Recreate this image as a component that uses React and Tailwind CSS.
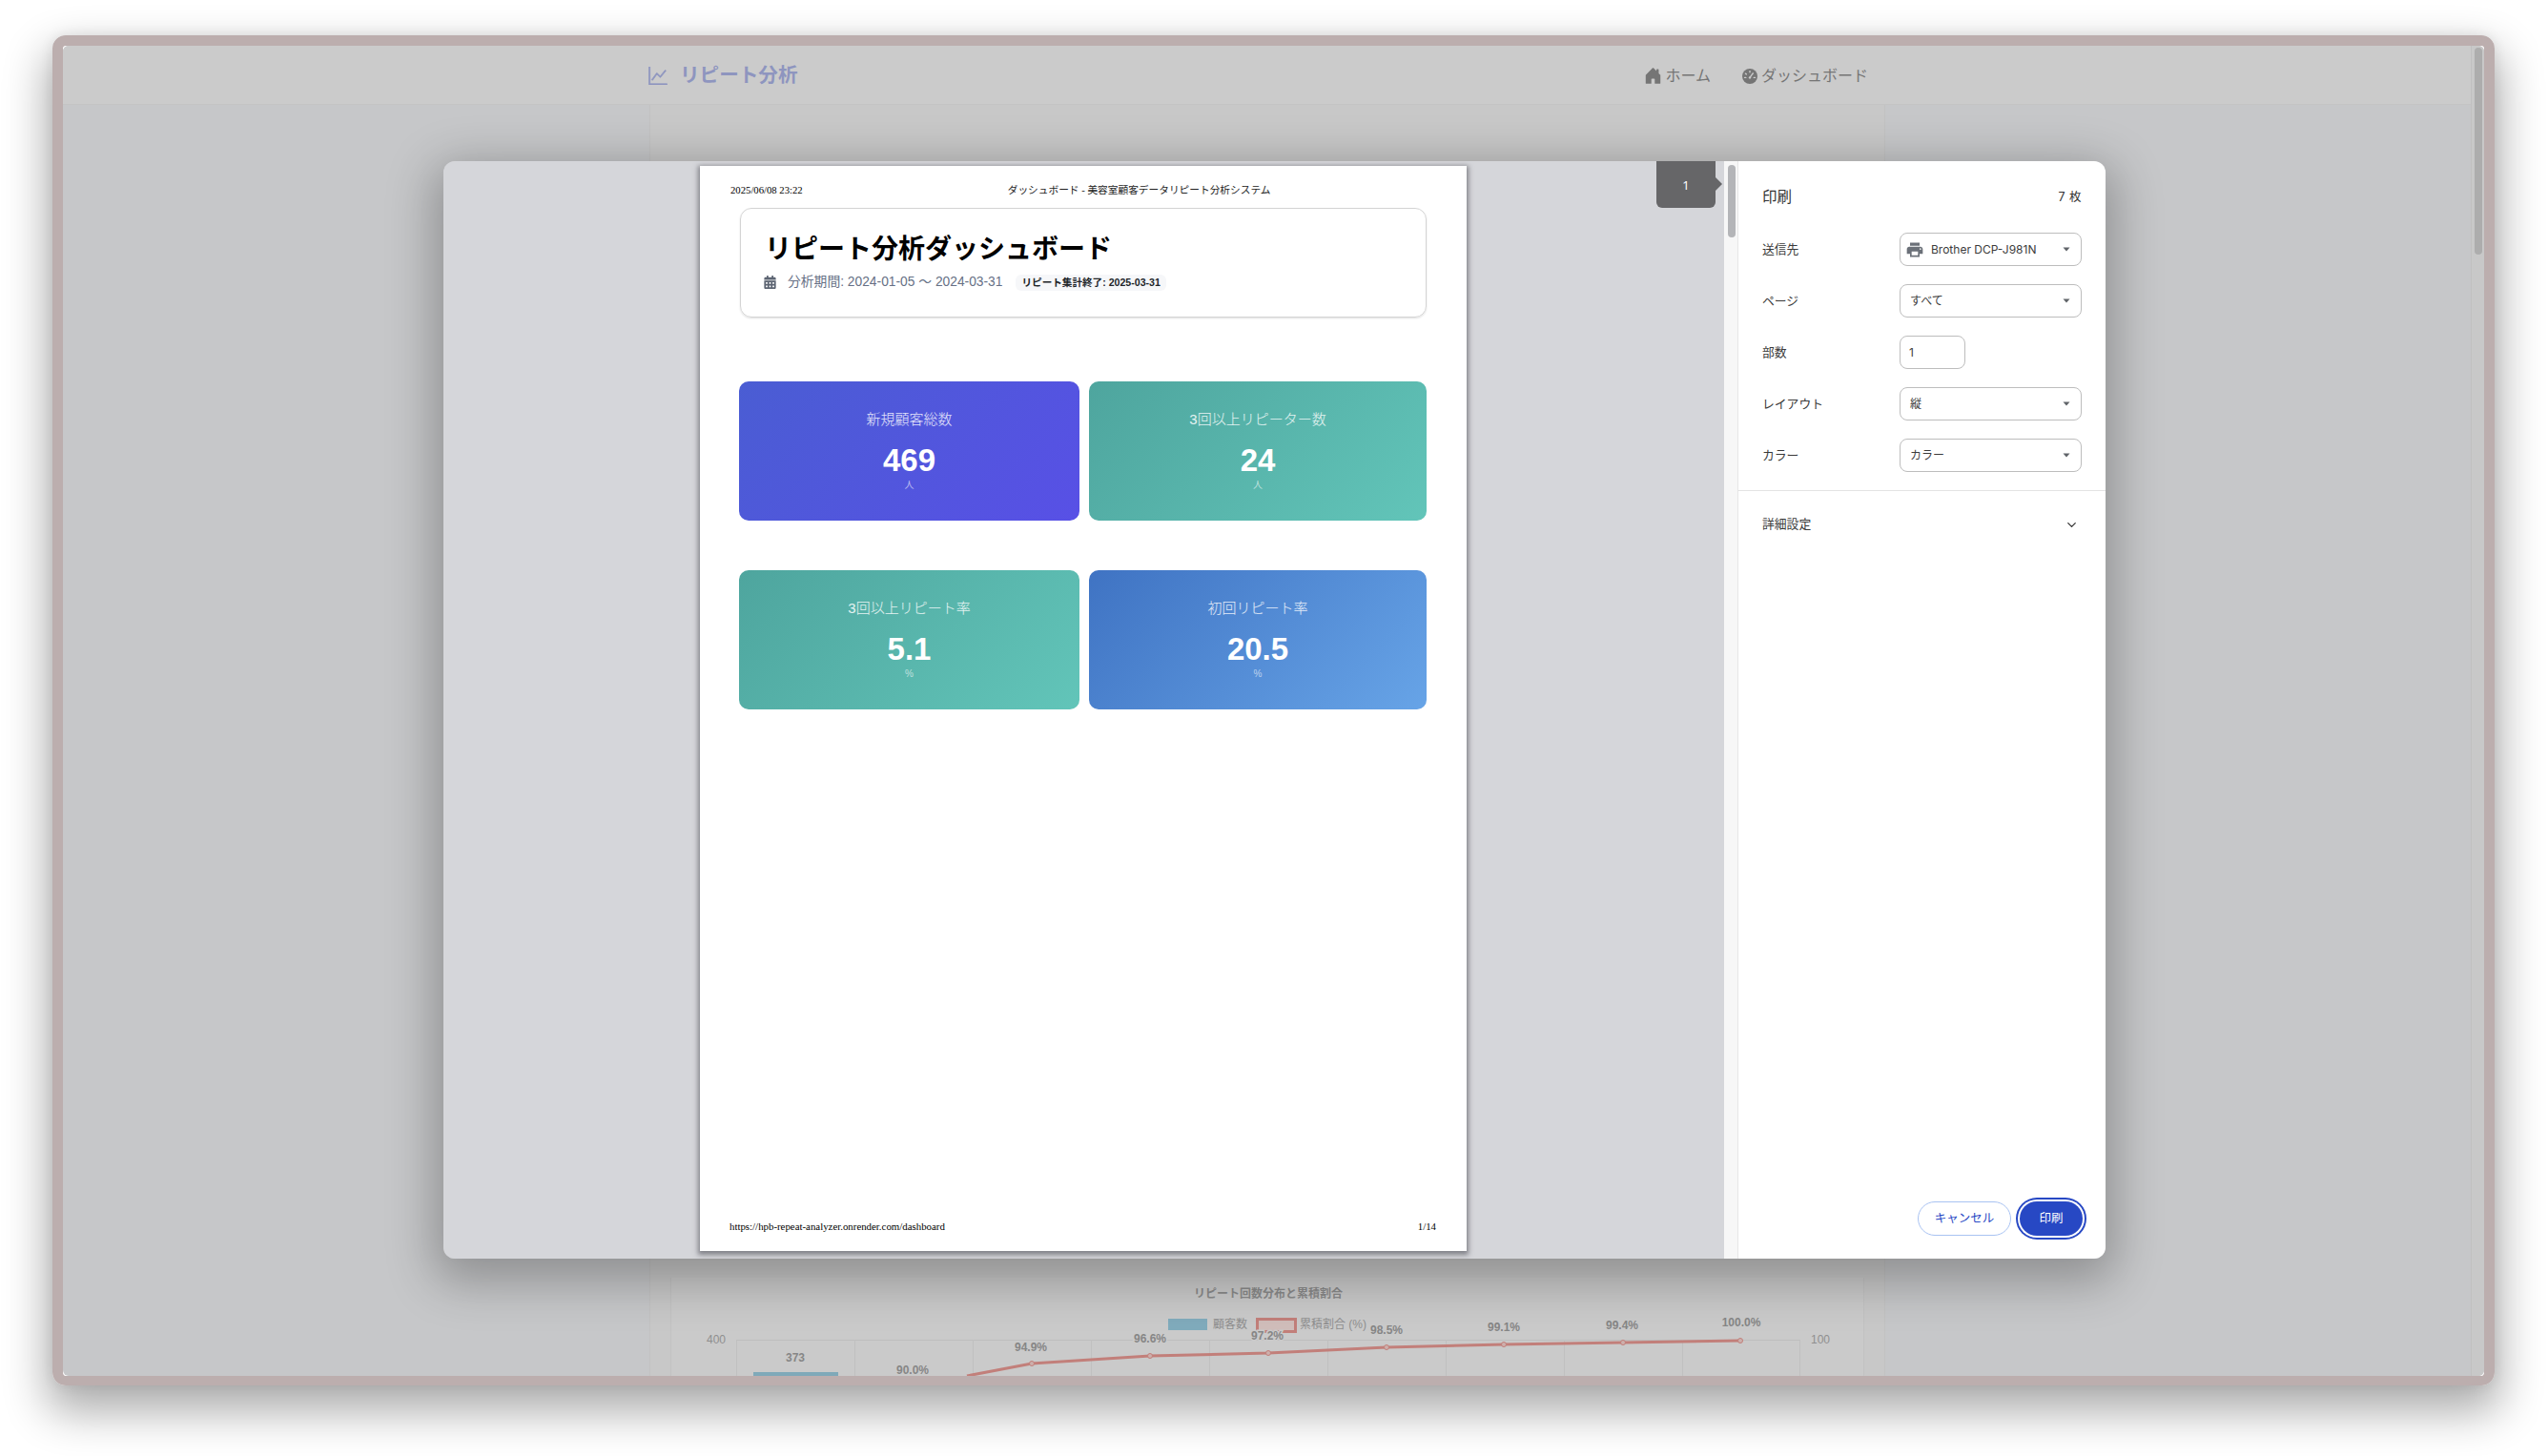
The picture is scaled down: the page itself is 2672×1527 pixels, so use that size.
import { FaCalendarAlt } from 'react-icons/fa';
import { BsGraphUp, BsHouseDoorFill } from 'react-icons/bs';
import { MdPrint } from 'react-icons/md';
import { ChevronDown } from 'lucide-react';

const sansJp = "font-['Liberation_Sans','Noto_Sans_CJK_JP',sans-serif]";

const statCards = [
  { label: '新規顧客総数', value: '469', unit: '人', gradient: 'bg-[linear-gradient(135deg,#4a5dd3,#5850e6)]' },
  { label: '3回以上リピーター数', value: '24', unit: '人', gradient: 'bg-[linear-gradient(135deg,#4ea59e,#62c5b9)]' },
  { label: '3回以上リピート率', value: '5.1', unit: '%', gradient: 'bg-[linear-gradient(135deg,#4ea59e,#62c5b9)]' },
  { label: '初回リピート率', value: '20.5', unit: '%', gradient: 'bg-[linear-gradient(135deg,#3f73c3,#67a4e7)]' },
];

// chart coordinates are relative to the top left of the svg
const gridX = [68, 192, 316, 440, 564, 688, 812, 936, 1060, 1183];
const linePoints = [
  [310, 103],
  [378, 90],
  [502, 82],
  [626, 79],
  [750, 73],
  [873, 70],
  [998, 68],
  [1121, 66],
];
const pointLabels = [
  ['373', 130, 88],
  ['90.0%', 253, 101],
  ['94.9%', 377, 77],
  ['96.6%', 502, 68],
  ['97.2%', 625, 65],
  ['98.5%', 750, 59],
  ['99.1%', 873, 56],
  ['99.4%', 997, 54],
  ['100.0%', 1122, 51],
];

function DashboardIcon() {
  return (
    <svg width="16" height="16" viewBox="0 0 16 16" className="ml-[33px] shrink-0">
      <circle cx="8" cy="8" r="8" fill="#757575" />
      <g stroke="#cbcbcb" strokeWidth="1.4" strokeLinecap="round">
        <path d="M8 2.6v1.2" />
        <path d="M3.4 5.2l1 .6" />
        <path d="M2.6 9.4h1.2" />
        <path d="M12.2 9.4h1.2" />
        <path d="M8 9.4l3.2-4.6" />
      </g>
      <circle cx="8" cy="9.4" r="1.2" fill="#cbcbcb" />
    </svg>
  );
}

function Chart() {
  return (
    <svg width="1250" height="103" className="block shrink-0 font-['Liberation_Sans','Noto_Sans_CJK_JP',sans-serif]">
      <text x="626" y="21" textAnchor="middle" fontSize="12" fontWeight="700" fill="#8a8a8a">
        リピート回数分布と累積割合
      </text>
      <rect x="521" y="43" width="41" height="12" fill="#80abbc" />
      <text x="568" y="53" fontSize="12" fill="#8f8f8f">顧客数</text>
      <rect x="614.5" y="43.5" width="40" height="13" fill="#d0bdba" stroke="#c27f7a" strokeWidth="3" />
      <text x="659" y="53" fontSize="12" fill="#8f8f8f">累積割合 (%)</text>
      <text x="47" y="69" fontSize="12" fill="#8f8f8f" textAnchor="middle">400</text>
      <text x="1205" y="69" fontSize="12" fill="#8f8f8f" textAnchor="middle">100</text>
      <line x1="68" y1="65.5" x2="1183" y2="65.5" stroke="#bdbdbd" />
      {gridX.map((x) => (
        <line key={x} x1={x + 0.5} y1="65" x2={x + 0.5} y2="103" stroke="#c0c0c0" />
      ))}
      <rect x="86" y="99" width="89" height="4" fill="#7fa9b9" />
      <polyline
        points={linePoints.map((p) => p.join(',')).join(' ')}
        fill="none"
        stroke="#c27f7a"
        strokeWidth="3"
      />
      {linePoints.slice(1).map(([x, y]) => (
        <circle key={x} cx={x} cy={y} r="2.5" fill="#cdb0ad" stroke="#c27f7a" />
      ))}
      {pointLabels.map(([text, x, y]) => (
        <text
          key={text}
          x={x}
          y={y}
          textAnchor="middle"
          fontSize="12"
          fontWeight="700"
          fill="#868686"
          stroke="#cacaca"
          strokeWidth="3"
          paintOrder="stroke"
        >
          {text}
        </text>
      ))}
    </svg>
  );
}

function StatCard({ label, value, unit, gradient }) {
  return (
    <div className={`flex h-[146px] flex-col items-center rounded-[10px] pt-[30px] text-white ${gradient}`}>
      <div className="h-5 text-[15px] leading-5 font-light text-white/85">{label}</div>
      <div className="mt-[16px] h-[34px] text-[33px] leading-[34px] font-bold">{value}</div>
      <div className="mt-[3px] text-[10px] leading-3 text-white/60">{unit}</div>
    </div>
  );
}

function PrintedPage() {
  return (
    <div className={`ml-[269px] flex h-[1138px] w-[804px] shrink-0 flex-col bg-white shadow-[0_2px_5px_2px_rgba(60,60,70,0.55)] ${sansJp}`}>
      <div className="flex h-[44px] items-center pt-[7px] pl-[32px] font-['Liberation_Serif','Noto_Sans_CJK_JP',serif] text-[10.7px] text-black">
        <span>2025/06/08 23:22</span>
        <span className="ml-[215px] text-[#222]">ダッシュボード - 美容室顧客データリピート分析システム</span>
      </div>
      <div className="mx-[42px] h-[115px] rounded-[12px] border border-[#d4d4d4] px-[25px] pt-[25px] shadow-[0_1px_2px_rgba(0,0,0,0.12)]">
        <h1 className="text-[28px] leading-[36px] font-bold text-black">リピート分析ダッシュボード</h1>
        <div className="mt-[7px] flex h-[18px] items-center text-[13.8px] text-[#667085]">
          <FaCalendarAlt className="ml-[-1px] h-[14px] w-[13px] shrink-0 text-[#5c6472]" />
          <span className="ml-[12px]">分析期間: 2024-01-05 〜 2024-03-31</span>
          <span className="ml-[14px] rounded-[6px] bg-[#f6f7f9] px-[6px] text-[10.6px] leading-[17px] font-bold text-[#212529]">
            リピート集計終了: 2025-03-31
          </span>
        </div>
      </div>
      <div className="mx-[41px] mt-[67px] grid grid-cols-[357px_354px] gap-x-[10px] gap-y-[52px]">
        {statCards.map((card) => (
          <StatCard key={card.label} {...card} />
        ))}
      </div>
      <div className="mt-auto flex h-[34px] items-start justify-between pr-[32px] pl-[31px] font-['Liberation_Serif',serif] text-[10.85px] text-black">
        <span>https://hpb-repeat-analyzer.onrender.com/dashboard</span>
        <span>1/14</span>
      </div>
    </div>
  );
}

function Field({ label, value, icon, narrow, caret = true }) {
  return (
    <div className="mb-[19px] flex h-[35px] items-center">
      <div className="w-[144px] text-[12.8px] text-[#3a3a3a]">{label}</div>
      <div className={`flex h-[35px] items-center rounded-[8px] border border-[#bdbdbd] pr-[10px] text-[12px] text-[#3c3c3c] ${narrow ? 'w-[69px] pl-[9px]' : 'w-[191px] pl-[10px]'}`}>
        {icon}
        <span>{value}</span>
        {caret && (
          <svg width="8" height="5" viewBox="0 0 8 5" className="mr-[1px] ml-auto">
            <path d="M0.5 0.5h7L4 4.5z" fill="#5f6368" />
          </svg>
        )}
      </div>
    </div>
  );
}

function PrintPanel() {
  return (
    <div className="flex h-full w-[385px] shrink-0 flex-col bg-white font-['Inter','Noto_Sans_CJK_JP',sans-serif]">
      <div className="px-[25px] pt-[27px]">
        <div className="mb-[26px] flex h-[22px] w-[335px] items-center justify-between text-[#333]">
          <span className="text-[15.5px]">印刷</span>
          <span className="text-[12.5px] tracking-[0.5px]">7 枚</span>
        </div>
        <Field
          label="送信先"
          value="Brother DCP-J981N"
          icon={<MdPrint className="mr-[7px] ml-[-5px] h-[20px] w-[20px] text-[#6b7078]" />}
        />
        <Field label="ページ" value="すべて" />
        <Field label="部数" value="1" narrow caret={false} />
        <Field label="レイアウト" value="縦" />
        <Field label="カラー" value="カラー" />
      </div>
      <div className="h-px bg-[#e3e3e3]" />
      <div className="flex h-[70px] w-[360px] items-center justify-between pr-[3px] pl-[25px] text-[12.8px] text-[#3a3a3a]">
        <span>詳細設定</span>
        <ChevronDown size={15} strokeWidth={2} className="text-[#333]" />
      </div>
      <div className="mt-auto flex justify-end gap-[9px] pr-[24px] pb-[24px] text-[12.5px]">
        <button className="h-[36px] w-[98px] rounded-full border border-[#a9c3f2] bg-white text-[#2748c4]">キャンセル</button>
        <button className="h-[36px] w-[66px] rounded-full bg-[#2748c4] text-white shadow-[0_0_0_2px_#ffffff,0_0_0_4px_#2748c4]">印刷</button>
      </div>
    </div>
  );
}

function PrintDialog() {
  return (
    <div className="absolute top-[121px] left-[399px] flex h-[1151px] w-[1743px] overflow-hidden rounded-[12px] shadow-[0_14px_50px_10px_rgba(0,0,0,0.28)]">
      <div className="relative flex min-w-0 flex-1 bg-[#d5d6da] pt-[5px]">
        <PrintedPage />
        <div className="absolute top-0 left-[1272px] flex h-[49px] w-[62px] items-center justify-center rounded-b-[6px] bg-[#666668] pt-[2px] text-[13px] text-white">
          1
        </div>
        <svg width="7" height="14" viewBox="0 0 7 14" className="absolute top-[17px] left-[1334px]">
          <path d="M0 0l7 7-7 7z" fill="#666668" />
        </svg>
      </div>
      <div className="w-[15px] shrink-0 border-r border-[#e6e6e6] bg-[#f7f7f7] pt-[4px] pl-[4px]">
        <div className="h-[76px] w-[8px] rounded-full bg-[#b4b5b8]" />
      </div>
      <PrintPanel />
    </div>
  );
}

export default function App() {
  return (
    <div className="h-[1527px] w-full overflow-hidden bg-white pt-[37px] pr-[56px] pl-[55px]">
      <div className="relative h-[1416px] rounded-[14px] border-x-[11px] border-t-[11px] border-b-[10px] border-[#bcaeae] shadow-[0_22px_46px_6px_rgba(0,0,0,0.32),0_0_14px_rgba(0,0,0,0.08)]">
        <div className="flex h-full overflow-hidden rounded-[6px] bg-[#c6c7c9]">
          <div className="flex min-w-0 flex-1 flex-col">
            <header className={`flex h-[62px] shrink-0 items-center border-b border-[#c4c4c4] bg-[#cbcbcb] pt-[2px] ${sansJp}`}>
              <div className="ml-[614px] flex items-center text-[#8e95bf]">
                <BsGraphUp className="h-[19px] w-[20px]" stroke="currentColor" strokeWidth={0.6} />
                <span className="ml-[13px] text-[20.6px] font-bold">リピート分析</span>
              </div>
              <nav className="ml-[887px] flex items-center text-[16px] text-[#757575]">
                <BsHouseDoorFill className="h-[19px] w-[19px]" />
                <span className="ml-[4px]">ホーム</span>
                <DashboardIcon />
                <span className="ml-[4px]">ダッシュボード</span>
              </nav>
            </header>
            <main className="flex min-h-0 flex-1 pl-[615px]">
              <div className="flex h-full w-[1296px] flex-col justify-end border-x border-[#c2c2c2] bg-[#c8c8c8] px-[21px]">
                <div className="border-x border-[#c2c2c2] bg-[#cacaca]">
                  <Chart />
                </div>
              </div>
            </main>
          </div>
          <div className="w-[14px] shrink-0 border-l border-[#c0c0c0] bg-[#c8c8c8] pt-[2px] pl-[3px]">
            <div className="h-[217px] w-[8px] rounded-full bg-[#adadad]" />
          </div>
        </div>
        <PrintDialog />
      </div>
    </div>
  );
}
